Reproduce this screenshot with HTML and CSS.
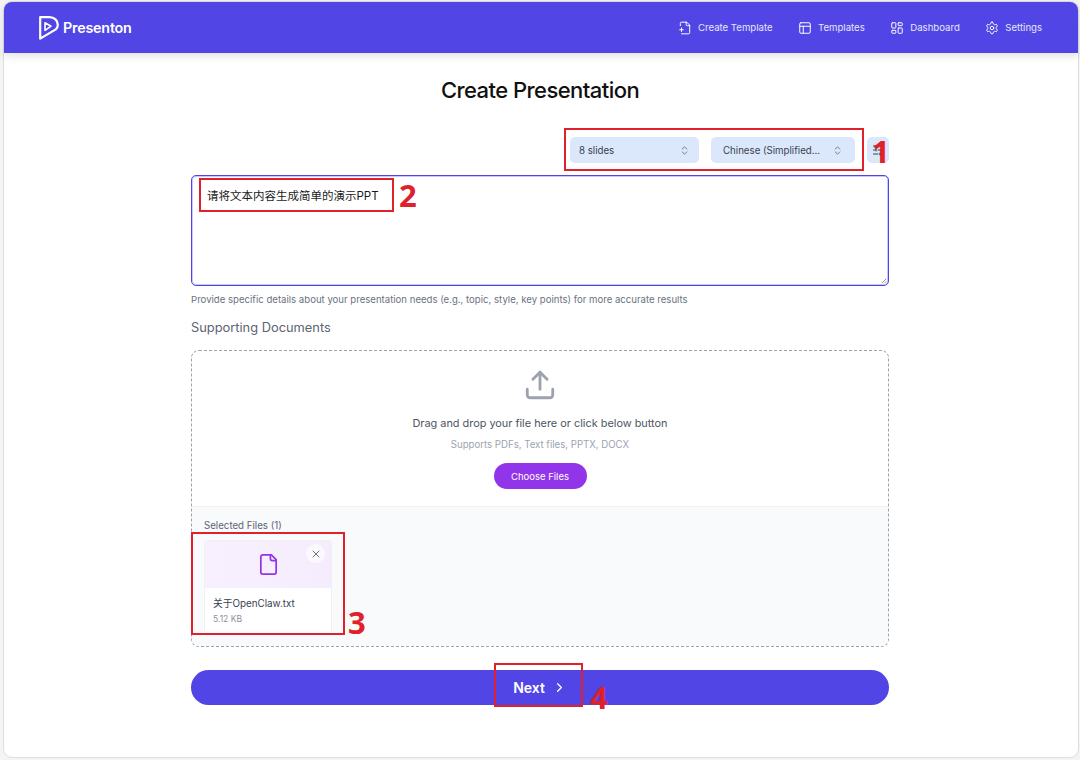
FILE: index.html
```html
<!DOCTYPE html>
<html lang="en">
<head>
<meta charset="utf-8">
<title>Presenton</title>
<link rel="stylesheet" href="styles.css">
</head>
<body>
<div class="window">
  <header class="nav">
    <a class="brand">
      <svg class="logo" viewBox="0 0 20 24" fill="none" stroke="#fff" stroke-width="2.2" stroke-linejoin="round"><path d="M1.2 1.2H10.5C15.4 1.2 18.8 4.6 18.8 8.8C18.8 10.8 18 12.4 16.8 13.4L1.2 22.6Z"/><path d="M6 6.8L12 10.2L6 14.4Z" stroke-width="1.6"/></svg>
      <span>Presenton</span>
    </a>
    <nav class="links">
      <a class="link"><svg class="ic" viewBox="0 0 24 24"><path d="M6 22h12a2 2 0 0 0 2-2V7l-5-5H6a2 2 0 0 0-2 2v4"/><path d="M14 2v4a2 2 0 0 0 2 2h4"/><path d="M3 15h6M6 12v6"/></svg>Create Template</a>
      <a class="link"><svg class="ic" viewBox="0 0 24 24"><rect x="3" y="3" width="18" height="18" rx="2"/><path d="M3 9h18M9 21V9"/></svg>Templates</a>
      <a class="link"><svg class="ic" viewBox="0 0 24 24"><rect x="3" y="3" width="7" height="9" rx="1"/><rect x="14" y="3" width="7" height="5" rx="1"/><rect x="14" y="12" width="7" height="9" rx="1"/><rect x="3" y="16" width="7" height="5" rx="1"/></svg>Dashboard</a>
      <a class="link"><svg class="ic" viewBox="0 0 24 24"><path d="M12.22 2h-.44a2 2 0 0 0-2 2v.18a2 2 0 0 1-1 1.73l-.43.25a2 2 0 0 1-2 0l-.15-.08a2 2 0 0 0-2.73.73l-.22.38a2 2 0 0 0 .73 2.73l.15.1a2 2 0 0 1 1 1.72v.51a2 2 0 0 1-1 1.74l-.15.09a2 2 0 0 0-.73 2.73l.22.38a2 2 0 0 0 2.73.73l.15-.08a2 2 0 0 1 2 0l.43.25a2 2 0 0 1 1 1.73V20a2 2 0 0 0 2 2h.44a2 2 0 0 0 2-2v-.18a2 2 0 0 1 1-1.73l.43-.25a2 2 0 0 1 2 0l.15.08a2 2 0 0 0 2.73-.73l.22-.39a2 2 0 0 0-.73-2.73l-.15-.08a2 2 0 0 1-1-1.74v-.5a2 2 0 0 1 1-1.74l.15-.09a2 2 0 0 0 .73-2.73l-.22-.38a2 2 0 0 0-2.73-.73l-.15.08a2 2 0 0 1-2 0l-.43-.25a2 2 0 0 1-1-1.73V4a2 2 0 0 0-2-2z"/><circle cx="12" cy="12" r="3"/></svg>Settings</a>
    </nav>
  </header>

  <main class="main">
    <h1 class="title">Create Presentation</h1>

    <div class="config">
      <div class="select slides"><span>8 slides</span><svg class="updown" viewBox="0 0 24 24"><path d="m7 15 5 5 5-5M7 9l5-5 5 5"/></svg></div>
      <div class="select lang"><span>Chinese (Simplified...</span><svg class="updown" viewBox="0 0 24 24"><path d="m7 15 5 5 5-5M7 9l5-5 5 5"/></svg></div>
      <div class="tune"><svg viewBox="0 0 24 24"><path d="M21 4h-7M10 4H3M21 12h-9M8 12H3M21 20h-5M12 20H3M14 2v4M8 10v4M16 18v4"/></svg></div>
    </div>

    <div class="prompt">请将文本内容生成简单的演示PPT<svg class="grip" viewBox="0 0 8 8"><path d="M1 7 7 1M4.5 7 7 4.5"/></svg></div>
    <p class="hint">Provide specific details about your presentation needs (e.g., topic, style, key points) for more accurate results</p>

    <h2 class="docs">Supporting Documents</h2>
    <section class="drop">
      <div class="drop-top">
        <svg class="upload" viewBox="0 0 24 24"><path d="M21 15v4a2 2 0 0 1-2 2H5a2 2 0 0 1-2-2v-4"/><path d="M17 8l-5-5-5 5"/><path d="M12 3v12"/></svg>
        <p class="drag">Drag and drop your file here or click below button</p>
        <p class="supports">Supports PDFs, Text files, PPTX, DOCX</p>
        <div class="choose">Choose Files</div>
      </div>
      <div class="selected">
        <p class="sel-label">Selected Files (1)</p>
        <div class="file">
          <div class="thumb">
            <svg class="fileic" viewBox="0 0 24 24"><path d="M15 2H6a2 2 0 0 0-2 2v16a2 2 0 0 0 2 2h12a2 2 0 0 0 2-2V7Z"/><path d="M14 2v4a2 2 0 0 0 2 2h4"/></svg>
            <span class="close"><svg viewBox="0 0 24 24"><path d="M18 6 6 18M6 6l12 12"/></svg></span>
          </div>
          <div class="meta">
            <p class="fname">关于OpenClaw.txt</p>
            <p class="fsize">5.12 KB</p>
          </div>
        </div>
      </div>
    </section>

    <div class="next">Next<svg viewBox="0 0 24 24"><path d="m9 18 6-6-6-6"/></svg></div>
  </main>
</div>

<div class="mark m1"></div><span class="num n1">1</span>
<div class="mark m2"></div><span class="num n2">2</span>
<div class="mark m3"></div><span class="num n3">3</span>
<div class="mark m4"></div><span class="num n4">4</span>
</body>
</html>
```
FILE: styles.css
```css
* { box-sizing: border-box; }
html, body { margin: 0; padding: 0; }
body {
  width: 1080px;
  height: 760px;
  overflow: hidden;
  position: relative;
  background: #f4f4f4;
  font-family: Inter, "Noto Sans CJK SC", sans-serif;
  color: #111827;
}
p, h1, h2 { margin: 0; }

.window {
  margin: 1px 1px 0 3px;
  height: 757px;
  background: #fff;
  border: 1px solid #dedee0;
  border-radius: 9px;
}

.nav {
  height: 51px;
  background: #5146e5;
  border-radius: 8px 8px 0 0;
  box-shadow: 0 3px 8px rgba(0,0,0,.12);
  display: flex;
  align-items: center;
  justify-content: space-between;
  padding: 0 36px 0 35px;
  color: #fff;
}
.brand {
  display: flex;
  align-items: center;
  gap: 4px;
  font-size: 14.3px;
  font-weight: 600;
  letter-spacing: -.2px;
}
.logo { width: 20px; height: 24px; }
.links { display: flex; align-items: center; gap: 25px; }
.link {
  display: flex;
  align-items: center;
  gap: 6.5px;
  font-size: 9.6px;
  color: #e6e7fb;
}
.ic {
  width: 14px;
  height: 14px;
  fill: none;
  stroke: #fff;
  stroke-width: 1.7;
  stroke-linecap: round;
  stroke-linejoin: round;
}

.main {
  width: 698px;
  margin-left: 187px;
  display: flex;
  flex-direction: column;
}
.title {
  font-size: 22px;
  font-weight: 500;
  line-height: 28px;
  letter-spacing: -.55px;
  text-align: center;
  margin-top: 23px;
  color: #101010;
}
.config {
  display: flex;
  justify-content: flex-end;
  align-items: center;
  gap: 12px;
  margin-top: 33px;
  height: 26px;
}
.select {
  height: 26px;
  background: #dbe8fb;
  border-radius: 5px;
  display: flex;
  align-items: center;
  justify-content: space-between;
  padding: 0 9px 0 9px;
  font-size: 9.7px;
  color: #374151;
}
.slides { width: 129px; }
.lang { width: 144px; padding: 0 12px 0 12px; }
.updown {
  width: 11px;
  height: 11px;
  fill: none;
  stroke: #6b7280;
  stroke-width: 2;
  stroke-linecap: round;
  stroke-linejoin: round;
}
.tune {
  width: 22px;
  height: 26px;
  background: #dbe8fb;
  border-radius: 5px;
  display: flex;
  align-items: center;
  justify-content: center;
}
.tune svg {
  width: 12px;
  height: 12px;
  fill: none;
  stroke: #374151;
  stroke-width: 2;
  stroke-linecap: round;
}
.prompt {
  position: relative;
  height: 111px;
  margin-top: 12px;
  border: 1px solid #5146e5;
  box-shadow: inset 0 0 0 1px rgba(81,70,229,.3);
  border-radius: 5px;
  padding: 11px 15px;
  font-size: 11.5px;
  line-height: 18px;
  color: #1a1a1a;
}
.grip {
  position: absolute;
  right: 1px;
  bottom: 1px;
  width: 6px;
  height: 6px;
  fill: none;
  stroke: #777;
  stroke-width: 1;
}
.hint {
  margin-top: 7px;
  font-size: 9.6px;
  line-height: 13px;
  color: #6b7280;
}
.docs {
  margin-top: 14px;
  font-size: 12.85px;
  font-weight: 400;
  line-height: 16px;
  color: #5b6472;
}
.drop {
  margin-top: 14px;
  height: 297px;
  border: 1px dashed #9ca3af;
  border-radius: 8px;
  overflow: hidden;
  display: flex;
  flex-direction: column;
}
.drop-top {
  height: 156px;
  display: flex;
  flex-direction: column;
  align-items: center;
  border-bottom: 1px solid #f0f1f3;
}
.upload {
  width: 34px;
  height: 34px;
  margin-top: 17px;
  fill: none;
  stroke: #9ca3af;
  stroke-width: 2;
  stroke-linecap: round;
  stroke-linejoin: round;
}
.drag {
  margin-top: 13px;
  font-size: 10.9px;
  line-height: 16px;
  color: #4b5563;
}
.supports {
  margin-top: 7px;
  font-size: 9.65px;
  line-height: 14px;
  color: #9ca3af;
}
.choose {
  margin-top: 11px;
  width: 93px;
  height: 26px;
  border-radius: 13px;
  background: #9234ea;
  color: #fff;
  font-size: 9.5px;
  display: flex;
  align-items: center;
  justify-content: center;
}
.selected {
  flex: 1;
  background: #f9fafb;
  padding: 12px 12px 0;
}
.sel-label {
  font-size: 9.7px;
  line-height: 14px;
  color: #5b6472;
}
.file {
  width: 128px;
  height: 92px;
  margin-top: 7px;
  background: #fff;
  border: 1px solid #f0f0f3;
  border-bottom: 0;
  border-radius: 4px 4px 0 0;
}
.thumb {
  position: relative;
  height: 47px;
  background: linear-gradient(90deg, #f8f0fe, #f5edfd);
  display: flex;
  align-items: center;
  justify-content: center;
}
.fileic {
  width: 23px;
  height: 23px;
  fill: none;
  stroke: #9234ea;
  stroke-width: 1.8;
  stroke-linecap: round;
  stroke-linejoin: round;
}
.close {
  position: absolute;
  top: 3px;
  right: 6px;
  width: 19px;
  height: 19px;
  border-radius: 50%;
  background: #fbf8fe;
  display: flex;
  align-items: center;
  justify-content: center;
}
.close svg {
  width: 12px;
  height: 12px;
  fill: none;
  stroke: #6b7280;
  stroke-width: 2;
  stroke-linecap: round;
}
.meta { padding: 9px 8px 0; }
.fname {
  font-size: 9.8px;
  line-height: 14px;
  color: #374151;
}
.fsize {
  margin-top: 2px;
  font-size: 8.5px;
  line-height: 12px;
  color: #8b929e;
}
.next {
  margin-top: 23px;
  height: 35px;
  border-radius: 18px;
  background: #5146e5;
  color: #fff;
  font-size: 14px;
  font-weight: 600;
  display: flex;
  align-items: center;
  justify-content: center;
  gap: 7px;
}
.next svg {
  width: 15px;
  height: 15px;
  fill: none;
  stroke: #fff;
  stroke-width: 2;
  stroke-linecap: round;
  stroke-linejoin: round;
}

/* Red annotations drawn over the screenshot */
.mark {
  position: absolute;
  border: 2px solid #e0202a;
}
.num {
  position: absolute;
  font-family: "Open Sans", sans-serif;
  font-weight: 700;
  font-size: 31px;
  line-height: 36px;
  color: #e0202a;
}
.m1 { left: 564px; top: 128px; width: 300px; height: 43px; }
.n1 { left: 872px; top: 133px; }
.m2 { left: 199px; top: 178px; width: 195px; height: 34px; }
.n2 { left: 399px; top: 177px; }
.m3 { left: 191px; top: 532px; width: 154px; height: 103px; }
.n3 { left: 348px; top: 604px; }
.m4 { left: 494px; top: 663px; width: 89px; height: 44px; }
.n4 { left: 590px; top: 679px; }
```
